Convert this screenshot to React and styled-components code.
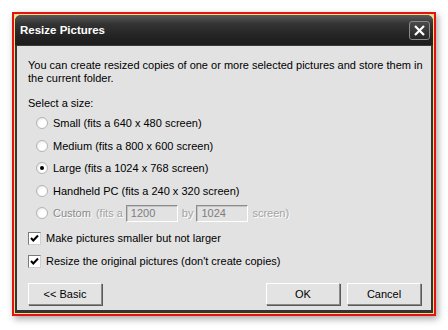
import React from "react";
import styled, { createGlobalStyle } from "styled-components";

const Global = createGlobalStyle`
  html, body { margin: 0; padding: 0; background: #fff; }
  body { font-family: "Liberation Sans", sans-serif; }
`;

const Stage = styled.div`
  width: 448px;
  height: 330px;
  padding: 12px;
  box-sizing: border-box;
`;

const RedFrame = styled.div`
  width: 424px;
  height: 304px;
  box-sizing: border-box;
  border: 2px solid #e3140f;
  background: #f3dd8a;
  padding: 1px;
  box-shadow: 2px 3px 7px rgba(0, 0, 0, 0.35);
`;

const Window = styled.div`
  height: 100%;
  display: flex;
  flex-direction: column;
  background: #343434;
  border-radius: 6px 6px 0 0;
  padding: 0 2px 3px;
  box-sizing: border-box;
`;

const TitleBar = styled.div`
  height: 30px;
  flex: none;
  display: flex;
  align-items: center;
  justify-content: space-between;
  padding: 0 3px 0 5px;
  margin: 0 -2px;
  border-radius: 6px 6px 0 0;
  background: linear-gradient(#5a5a5a 0%, #333 30%, #222 75%, #1c1c1c 100%);
`;

const Title = styled.span`
  color: #fff;
  font-family: "Liberation Sans", sans-serif;
  font-weight: 700;
  font-size: 11.5px;
`;

const CloseBtn = styled.div`
  width: 19px;
  height: 17px;
  border: 1px solid #8a8a8a;
  border-radius: 3px;
  background: linear-gradient(#4a4a4a, #262626);
  display: flex;
  align-items: center;
  justify-content: center;
`;

const Content = styled.div`
  flex: 1;
  min-height: 0;
  background: #e2e2e2;
  border-top: 1px solid #3a3a3a;
  padding: 13px 6px 0 11px;
  font-family: "Liberation Sans", sans-serif;
  font-size: 11px;
  color: #000;
  display: flex;
  flex-direction: column;
  white-space: nowrap;
`;

const Intro = styled.p`
  margin: 0;
  line-height: 12.5px;
`;

const Label = styled.div`
  margin-top: 13px;
  line-height: 13px;
`;

const Options = styled.div`
  margin-top: 2px;
  display: flex;
  flex-direction: column;
`;

const Row = styled.div`
  height: ${p => p.$h || 22.5}px;
  display: flex;
  align-items: center;
  gap: ${p => p.$gap ?? 5}px;
  padding-left: ${p => p.$indent || 0}px;
  color: ${p => (p.$disabled ? "#a3a3a3" : "#000")};
  text-shadow: ${p => (p.$disabled ? "1px 1px 0 #fff" : "none")};
`;

const Radio = styled.span`
  width: 12px;
  height: 12px;
  border-radius: 50%;
  box-sizing: border-box;
  border: 1px solid #b4b4b4;
  background: radial-gradient(circle at 65% 65%, #fff 40%, #ececec 75%, #d6d6d6);
  display: flex;
  align-items: center;
  justify-content: center;
  flex: none;
  &::after {
    content: "";
    width: 4px;
    height: 4px;
    border-radius: 50%;
    background: ${p => (p.$on ? "#000" : "transparent")};
  }
`;

const Check = styled.span`
  width: 13px;
  height: 13px;
  box-sizing: border-box;
  border: 1px solid #7a7a7a;
  border-right-color: #d0d0d0;
  border-bottom-color: #d0d0d0;
  background: #fff;
  flex: none;
  display: flex;
  align-items: center;
  justify-content: center;
`;

const Muted = styled.span`
  color: #8a8a8a;
  text-shadow: 1px 1px 0 #fff;
`;

const Field = styled.span`
  width: 52px;
  height: 17px;
  box-sizing: border-box;
  border: 1px solid #8c8c8c;
  border-right-color: #fff;
  border-bottom-color: #fff;
  box-shadow: inset 1px 1px 0 #c4c4c4;
  color: #7e7e7e;
  text-shadow: none;
  padding-left: 4px;
  line-height: 15px;
  margin: 0 4px 0 3px;
`;

const Buttons = styled.div`
  margin-top: 10px;
  padding-right: 4px;
  display: flex;
  gap: 7px;
`;

const Button = styled.div`
  width: 74px;
  height: 22px;
  box-sizing: border-box;
  border: 1px solid #fff;
  border-right-color: #8a8a8a;
  border-bottom-color: #8a8a8a;
  box-shadow: 1px 1px 0 #5a5a5a;
  background: #e3e3e3;
  display: flex;
  align-items: center;
  justify-content: center;
  margin-left: ${p => (p.$push ? "auto" : "0")};
`;

const Tick = () => (
  <svg width="9" height="9" viewBox="0 0 9 9">
    <path d="M1 4 L3.3 6.5 L8 1.5" fill="none" stroke="#000" strokeWidth="2" />
  </svg>
);

const sizes = [
  ["Small (fits a 640 x 480 screen)", false],
  ["Medium (fits a 800 x 600 screen)", false],
  ["Large (fits a 1024 x 768 screen)", true],
  ["Handheld PC (fits a 240 x 320 screen)", false],
];

export default function App() {
  return (
    <Stage>
      <Global />
      <RedFrame>
        <Window>
          <TitleBar>
            <Title>Resize Pictures</Title>
            <CloseBtn>
              <svg width="11" height="11" viewBox="0 0 11 11">
                <path d="M1 1 L10 10 M10 1 L1 10" stroke="#fff" strokeWidth="2.2" />
              </svg>
            </CloseBtn>
          </TitleBar>
          <Content>
            <Intro>
              You can create resized copies of one or more selected pictures and store them in
              <br />
              the current folder.
            </Intro>
            <Label>Select a size:</Label>
            <Options>
              {sizes.map(([text, on]) => (
                <Row key={text} $indent={8}>
                  <Radio $on={on} />
                  {text}
                </Row>
              ))}
              <Row $indent={8}>
                <Radio />
                <Muted>Custom</Muted>
                <Row as="span" $disabled $gap={0} $h={20}>
                  (fits a<Field>1200</Field>by<Field>1024</Field>screen)
                </Row>
              </Row>
              <Row $h={23} style={{ marginTop: 2 }}>
                <Check><Tick /></Check>
                Make pictures smaller but not larger
              </Row>
              <Row $h={23}>
                <Check><Tick /></Check>
                Resize the original pictures (don't create copies)
              </Row>
            </Options>
            <Buttons>
              <Button>&lt;&lt; Basic</Button>
              <Button $push>OK</Button>
              <Button>Cancel</Button>
            </Buttons>
          </Content>
        </Window>
      </RedFrame>
    </Stage>
  );
}
